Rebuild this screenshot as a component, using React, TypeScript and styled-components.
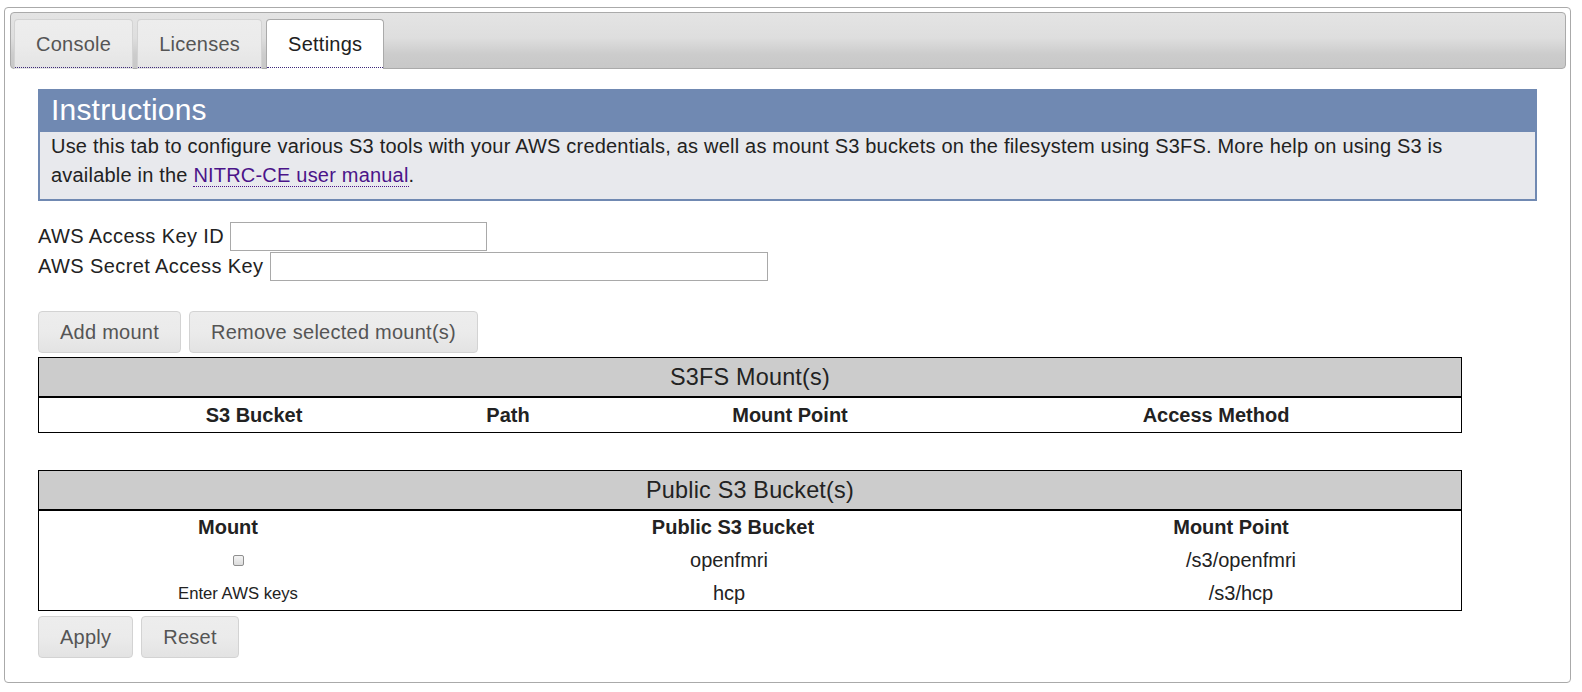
import styled, { createGlobalStyle } from 'styled-components';

const GlobalStyle = createGlobalStyle`
  body {
    margin: 0;
    background: #fff;
    font-family: "Liberation Sans", Arial, sans-serif;
    color: #222;
  }
`;

const Page = styled.div`
  padding: 7px 11px 10px 4px;
`;

const Widget = styled.div`
  border: 1px solid #aaa;
  border-radius: 4px;
  padding: 4px 4px 4px 5px;
  background: #fff;
`;

const TabBar = styled.ul`
  display: flex;
  align-items: flex-end;
  gap: 4px;
  margin: 0;
  padding: 5px 3px 0;
  height: 57px;
  box-sizing: border-box;
  list-style: none;
  border: 1px solid #aaa;
  border-radius: 4px;
  background: linear-gradient(#e4e4e4 0%, #dedede 45%, #cccccc 75%, #c8c8c8 100%);
`;

const Tab = styled.li<{ $active?: boolean }>`
  position: relative;
  height: 50px;
  box-sizing: border-box;
  margin-bottom: -1px;
  padding: 0 21px;
  display: flex;
  align-items: center;
  font-size: 20px;
  letter-spacing: 0.25px;
  border: 1px solid ${(p) => (p.$active ? '#aaa' : '#d3d3d3')};
  border-bottom: none;
  border-radius: 4px 4px 0 0;
  color: ${(p) => (p.$active ? '#212121' : '#555')};
  background: ${(p) =>
    p.$active ? '#fff' : 'linear-gradient(#ededed 0%, #ebebeb 50%, #e4e4e4 100%)'};
  cursor: pointer;

  &::after {
    content: '';
    position: absolute;
    left: 0;
    right: 0;
    bottom: 1px;
    border-bottom: 1px dotted #3d2a7a;
  }
`;

const Panel = styled.div`
  padding: 20px 29px 20px 28px;
`;

const InfoBox = styled.div`
  border: 2px solid #7089b2;
  background: #e8e9ed;
`;

const InfoTitle = styled.h2`
  margin: 0;
  padding: 0 11px 4px;
  height: 41px;
  box-sizing: border-box;
  line-height: 37px;
  font-size: 30px;
  font-weight: normal;
  letter-spacing: 0.2px;
  color: #fff;
  background: #7089b2;
`;

const InfoText = styled.p`
  margin: 0;
  padding: 0 24px 9px 11px;
  font-size: 20px;
  line-height: 29px;
  letter-spacing: 0.2px;
`;

const Link = styled.a`
  color: #4b1489;
  text-decoration: none;
  border-bottom: 1px dotted #4b1489;
`;

const KeyForm = styled.div`
  margin-top: 20px;
`;

const KeyRow = styled.label`
  display: flex;
  align-items: center;
  gap: 6px;
  height: 30px;
  font-size: 20px;
  letter-spacing: 0.4px;
`;

const TextInput = styled.input<{ $w: number }>`
  width: ${(p) => p.$w}px;
  height: 29px;
  box-sizing: border-box;
  border: 1px solid #a9a9a9;
  padding: 2px 4px;
  font: inherit;
`;

const ButtonRow = styled.div<{ $top: number }>`
  display: flex;
  gap: 8px;
  margin-top: ${(p) => p.$top}px;
`;

const Button = styled.button`
  font-family: "Liberation Sans", Arial, sans-serif;
  font-size: 20px;
  line-height: 22px;
  letter-spacing: 0.25px;
  padding: 9px 21px;
  color: #555;
  border: 1px solid #d3d3d3;
  border-radius: 4px;
  background: linear-gradient(#ededed 0%, #ebebeb 50%, #e3e3e3 100%);
  cursor: pointer;
`;

const DataTable = styled.div<{ $top: number }>`
  margin-top: ${(p) => p.$top}px;
  width: 1424px;
  border: 1px solid #000;
  box-sizing: border-box;
`;

const Caption = styled.div`
  height: 40px;
  box-sizing: border-box;
  border-bottom: 2px solid #000;
  background: #ccc;
  display: flex;
  align-items: center;
  justify-content: center;
  font-size: 23.4px;
  letter-spacing: 0.2px;
`;

const GridRow = styled.div<{ $cols: string; $h: number; $bold?: boolean }>`
  display: grid;
  grid-template-columns: ${(p) => p.$cols};
  align-items: center;
  height: ${(p) => p.$h}px;
  font-size: 20px;
  font-weight: ${(p) => (p.$bold ? 'bold' : 'normal')};
`;

const Cell = styled.div<{ $small?: boolean }>`
  text-align: center;
  font-size: ${(p) => (p.$small ? '16.7px' : 'inherit')};
  display: flex;
  justify-content: center;
  align-items: center;
`;

const Check = styled.input`
  appearance: none;
  margin: 0;
  width: 11px;
  height: 11px;
  border: 1px solid #8f8f8f;
  border-radius: 2px;
  background: linear-gradient(#f4f4f4, #dcdcdc);
`;

const mountCols = '430px 78px 486px 366px 1fr';
const bucketHeadCols = '378px 632px 364px 1fr';
const bucketDataCols = '398px 584px 1fr';

const buckets = [
  { name: 'openfmri', point: '/s3/openfmri', needsKeys: false },
  { name: 'hcp', point: '/s3/hcp', needsKeys: true },
];

export default function App() {
  return (
    <Page>
      <GlobalStyle />
      <Widget>
        <TabBar>
          <Tab>Console</Tab>
          <Tab>Licenses</Tab>
          <Tab $active>Settings</Tab>
        </TabBar>
        <Panel>
          <InfoBox>
            <InfoTitle>Instructions</InfoTitle>
            <InfoText>
              Use this tab to configure various S3 tools with your AWS credentials, as well as mount S3
              buckets on the filesystem using S3FS. More help on using S3 is available in the{' '}
              <Link href="#">NITRC-CE user manual</Link>.
            </InfoText>
          </InfoBox>

          <KeyForm>
            <KeyRow>
              AWS Access Key ID
              <TextInput $w={257} type="text" />
            </KeyRow>
            <KeyRow>
              AWS Secret Access Key
              <TextInput $w={498} type="password" />
            </KeyRow>
          </KeyForm>

          <ButtonRow $top={30}>
            <Button>Add mount</Button>
            <Button>Remove selected mount(s)</Button>
          </ButtonRow>

          <DataTable $top={4}>
            <Caption>S3FS Mount(s)</Caption>
            <GridRow $cols={mountCols} $h={34} $bold>
              <Cell>S3 Bucket</Cell>
              <Cell>Path</Cell>
              <Cell>Mount Point</Cell>
              <Cell>Access Method</Cell>
              <Cell />
            </GridRow>
          </DataTable>

          <DataTable $top={37}>
            <Caption>Public S3 Bucket(s)</Caption>
            <GridRow $cols={bucketHeadCols} $h={33} $bold>
              <Cell>Mount</Cell>
              <Cell>Public S3 Bucket</Cell>
              <Cell>Mount Point</Cell>
              <Cell />
            </GridRow>
            {buckets.map((b) => (
              <GridRow key={b.name} $cols={bucketDataCols} $h={33}>
                <Cell $small={b.needsKeys}>
                  {b.needsKeys ? 'Enter AWS keys' : <Check type="checkbox" />}
                </Cell>
                <Cell>{b.name}</Cell>
                <Cell>{b.point}</Cell>
              </GridRow>
            ))}
          </DataTable>

          <ButtonRow $top={5}>
            <Button>Apply</Button>
            <Button>Reset</Button>
          </ButtonRow>
        </Panel>
      </Widget>
    </Page>
  );
}
